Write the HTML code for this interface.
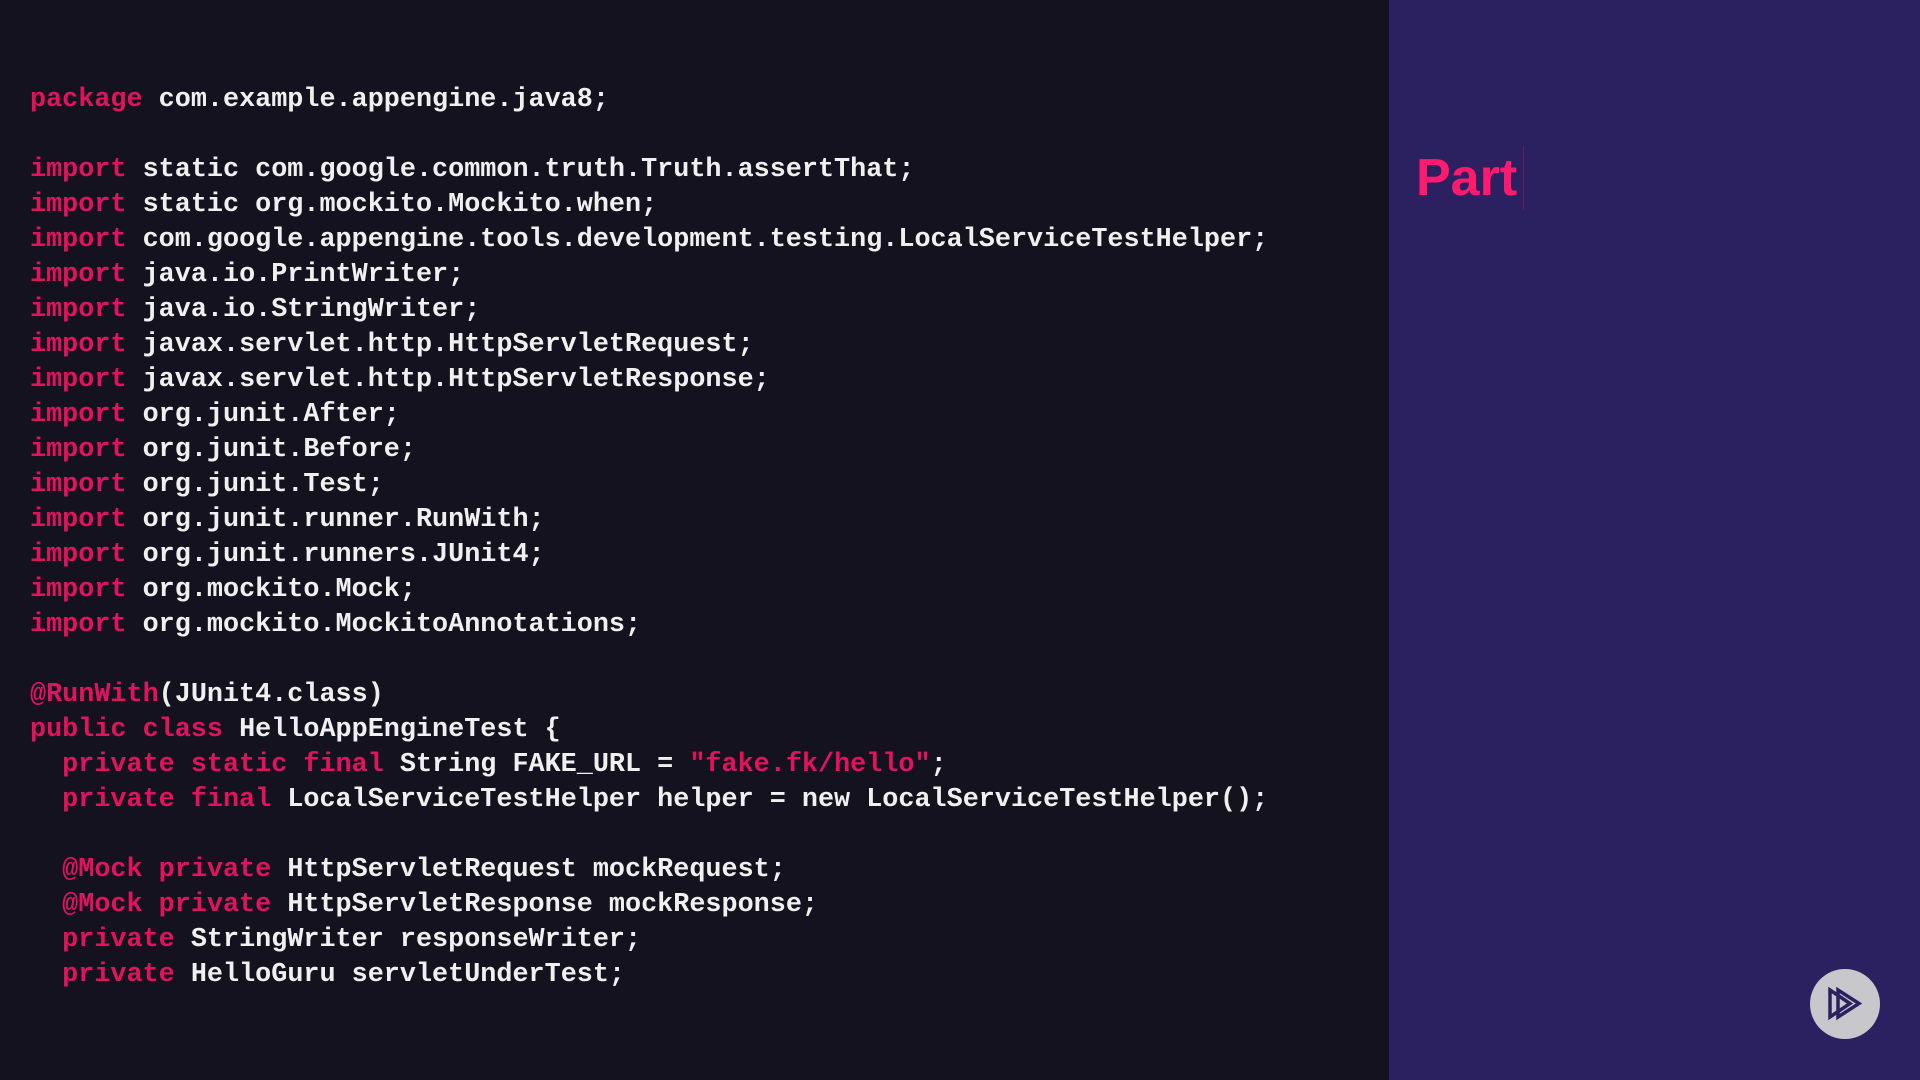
<!DOCTYPE html>
<html><head><meta charset="utf-8"><style>
html,body{margin:0;padding:0;width:1920px;height:1080px;overflow:hidden;background:#15121f}
.left{position:absolute;left:0;top:0;width:1389px;height:1080px;background:#15121f}
.right{position:absolute;left:1389px;top:0;width:531px;height:1080px;background:#2b2060}
pre{position:absolute;left:30px;top:83px;margin:0;font-family:"Liberation Mono",monospace;font-size:26.8px;line-height:35px;color:#f0f0f0;font-weight:bold;letter-spacing:0}
.k{color:#e0135c}
.part{position:absolute;left:1416px;top:148px;font-family:"Liberation Sans",sans-serif;font-weight:bold;font-size:52px;color:#ff1a6e;line-height:60px}
.bar{position:absolute;left:1523px;top:146px;width:1px;height:64px;background:#6a1a5e}
.btn{position:absolute;left:1810px;top:969px;width:70px;height:70px;border-radius:50%;background:#c8c8cc}
</style></head><body>
<div class="left"></div><div class="right"></div>
<pre><span class="k">package</span> com.example.appengine.java8;

<span class="k">import</span> static com.google.common.truth.Truth.assertThat;
<span class="k">import</span> static org.mockito.Mockito.when;
<span class="k">import</span> com.google.appengine.tools.development.testing.LocalServiceTestHelper;
<span class="k">import</span> java.io.PrintWriter;
<span class="k">import</span> java.io.StringWriter;
<span class="k">import</span> javax.servlet.http.HttpServletRequest;
<span class="k">import</span> javax.servlet.http.HttpServletResponse;
<span class="k">import</span> org.junit.After;
<span class="k">import</span> org.junit.Before;
<span class="k">import</span> org.junit.Test;
<span class="k">import</span> org.junit.runner.RunWith;
<span class="k">import</span> org.junit.runners.JUnit4;
<span class="k">import</span> org.mockito.Mock;
<span class="k">import</span> org.mockito.MockitoAnnotations;

<span class="k">@RunWith</span>(JUnit4.class)
<span class="k">public class</span> HelloAppEngineTest {
  <span class="k">private static final</span> String FAKE_URL = <span class="k">"fake.fk/hello"</span>;
  <span class="k">private final</span> LocalServiceTestHelper helper = new LocalServiceTestHelper();

  <span class="k">@Mock private</span> HttpServletRequest mockRequest;
  <span class="k">@Mock private</span> HttpServletResponse mockResponse;
  <span class="k">private</span> StringWriter responseWriter;
  <span class="k">private</span> HelloGuru servletUnderTest;</pre>
<div class="part">Part</div><div class="bar"></div>
<div class="btn"><svg width="70" height="70" viewBox="0 0 70 70"><path d="M20 21 L20 48 L40 34.5 Z M28 21 L28 48 L49 34.5 Z" fill="none" stroke="#2b2060" stroke-width="3.5" stroke-linejoin="miter"/></svg></div>
</body></html>
